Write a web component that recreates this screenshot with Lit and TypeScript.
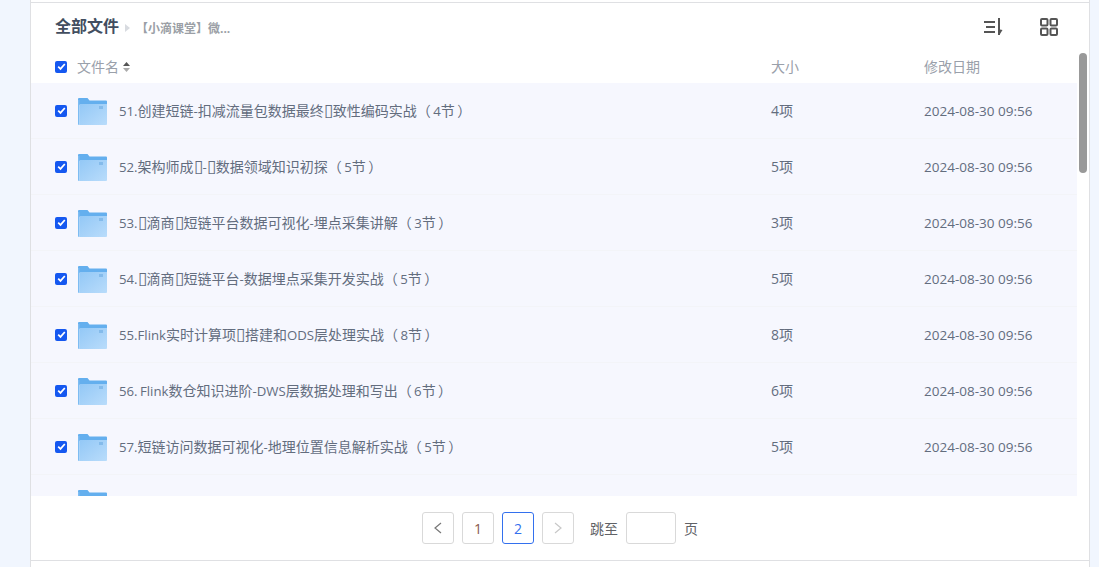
import { LitElement, html, css, nothing } from 'lit';
import { customElement } from 'lit/decorators.js';

const MISSING = '\u25AF';

const rows = [
  { name: `51.创建短链-扣减流量包数据最终${MISSING}致性编码实战（ 4节 ）`, size: '4项' },
  { name: `52.架构师成${MISSING}-${MISSING}数据领域知识初探（ 5节 ）`, size: '5项' },
  { name: `53.${MISSING}滴商${MISSING}短链平台数据可视化-埋点采集讲解（ 3节 ）`, size: '3项' },
  { name: `54.${MISSING}滴商${MISSING}短链平台-数据埋点采集开发实战（ 5节 ）`, size: '5项' },
  { name: `55.Flink实时计算项${MISSING}搭建和ODS层处理实战（ 8节 ）`, size: '8项' },
  { name: '56. Flink数仓知识进阶-DWS层数据处理和写出（ 6节 ）', size: '6项' },
  { name: '57.短链访问数据可视化-地理位置信息解析实战（ 5节 ）', size: '5项' },
  // scrolled almost out of view, only the top of its folder shows
  { name: '', size: '' },
];

// latin runs are a touch smaller than the CJK around them, the original font is narrower
const mixed = (text: string) =>
  text
    .split(/([\x20-\x7e]+|\u25AF)/)
    .map((part, i) => (i % 2 ? html`<span class=${part === MISSING ? 'tofu' : 'lat'}>${part}</span>` : part));

const check = html`<span class="check">
  <svg width="9" height="9" viewBox="0 0 9 9"><path d="M1.2 4.6 3.5 6.9 7.8 2" fill="none" stroke="#fff" stroke-width="1.7"/></svg>
</span>`;

const folder = html`<svg class="folder" width="29" height="27" viewBox="0 0 29 27">
  <defs>
    <linearGradient id="fg" x1="0" y1="0" x2="1" y2="1">
      <stop offset="0" stop-color="#93c8f6"/>
      <stop offset="1" stop-color="#b9dcfb"/>
    </linearGradient>
  </defs>
  <path d="M0 1Q0 0 1 0H9.5L11.5 2.5H28Q29 2.5 29 3.5V7H0Z" fill="#64afee"/>
  <path d="M0 2H1.5V27H1Q0 27 0 26Z" fill="#7dbcf2"/>
  <path d="M1.5 6H29V26Q29 27 28 27H1.5Z" fill="url(#fg)"/>
  <rect x="21" y="8" width="4" height="3" fill="#84bbeb"/>
</svg>`;

@customElement('app-root')
export class AppRoot extends LitElement {
  static styles = css`
    :host {
      display: block;
      height: 567px;
      overflow: hidden;
      background: #f1f6fe;
      font-family: 'Open Sans', 'Noto Sans CJK SC', sans-serif;
      font-size: 14px;
      color: #636d7e;
    }
    .shell {
      box-sizing: border-box;
      height: 567px;
      width: 1060px;
      margin-left: 30px;
      padding-top: 2px;
      background: #fff;
      border-left: 1px solid #dfe0e3;
      border-right: 1px solid #dfe0e3;
    }
    .panel {
      position: relative;
      box-sizing: border-box;
      height: 559px;
      border-top: 1px solid #dfe0e3;
      border-bottom: 1px solid #dfe0e3;
    }
    .top {
      display: flex;
      align-items: center;
      height: 47px;
      padding: 0 31px 0 24px;
    }
    .title {
      font-size: 16px;
      font-weight: 700;
      color: #424e60;
      line-height: 49px;
    }
    .sep {
      width: 0;
      height: 0;
      margin: 2px 6px 0 6px;
      border: 4px solid transparent;
      border-left: 5px solid #d8dbe0;
      border-right: 0;
    }
    .crumb {
      margin-top: 2px;
      font-size: 12px;
      font-weight: 700;
      color: #9b9fa6;
    }
    .tools {
      margin-left: auto;
      display: flex;
      align-items: center;
      gap: 37px;
    }
    .tools svg {
      display: block;
    }
    .head,
    .row {
      display: grid;
      grid-template-columns: 22px 694px 153px 1fr;
      align-items: center;
      padding-left: 24px;
    }
    .head {
      height: 31px;
      padding-bottom: 2px;
      color: #9aa0aa;
    }
    .head .check {
      margin-top: 2px;
    }
    .sort {
      display: inline-block;
      margin-left: 4px;
      vertical-align: 0;
    }
    .list {
      width: 1046px;
      height: 413px;
      overflow: hidden;
      background: #f6f7fe;
    }
    .row {
      height: 56px;
      box-sizing: border-box;
      border-bottom: 1px solid #f3f4f8;
      color: #636d7e;
    }
    .namecell {
      display: flex;
      align-items: center;
      gap: 12px;
    }
    .name,
    .size {
      margin-bottom: 2px;
    }
    .lat {
      font-size: 13.2px;
      word-spacing: -1px;
    }
    .tofu {
      font-size: 17px;
      line-height: 1;
    }
    .check {
      display: flex;
      align-items: center;
      justify-content: center;
      width: 12px;
      height: 12px;
      background: #1558f0;
      border-radius: 2px;
    }
    .folder {
      display: block;
      flex: none;
      margin: 1px 0 0 1px;
    }
    .date {
      font-size: 13.5px;
    }
    .thumb {
      position: absolute;
      top: 50px;
      left: 1048px;
      width: 8px;
      height: 120px;
      border-radius: 4px;
      background: #999;
    }
    .pager {
      display: flex;
      align-items: center;
      justify-content: center;
      gap: 8px;
      height: 64px;
      color: #606266;
    }
    .btn {
      display: flex;
      align-items: center;
      justify-content: center;
      box-sizing: border-box;
      width: 32px;
      height: 32px;
      border: 1px solid #d9d9d9;
      border-radius: 3px;
      color: #8a5a4c;
    }
    .btn.on {
      border-color: #3370ee;
      color: #3370ee;
    }
    .jump {
      margin-left: 8px;
    }
    .input {
      box-sizing: border-box;
      width: 50px;
      height: 32px;
      border: 1px solid #d9d9d9;
      border-radius: 3px;
    }
  `;

  render() {
    return html`
      <div class="shell">
        <div class="panel">
          <div class="top">
            <span class="title">全部文件</span>
            <span class="sep"></span>
            <span class="crumb">【小滴课堂】微...</span>
            <div class="tools">
              <svg width="20" height="18" viewBox="0 0 20 18" fill="none" stroke="#555" stroke-width="2">
                <path d="M1 4H12M3 9H12M1 14H12"/>
                <path d="M16 0V17"/>
                <path d="M17 11.5 19.5 12 17 16Z" fill="#555" stroke="none"/>
              </svg>
              <svg width="18" height="18" viewBox="0 0 18 18" fill="none" stroke="#555" stroke-width="2">
                <rect x="1" y="1" width="6.5" height="6.5" rx="1"/>
                <rect x="10.5" y="1" width="6.5" height="6.5" rx="1"/>
                <rect x="1" y="10.5" width="6.5" height="6.5" rx="1"/>
                <rect x="10.5" y="10.5" width="6.5" height="6.5" rx="1"/>
              </svg>
            </div>
          </div>
          <div class="head">
            ${check}
            <span>文件名<svg class="sort" width="7" height="10" viewBox="0 0 7 10"><path d="M3.5 0 7 4H0Z" fill="#555"/><path d="M3.5 10 7 6H0Z" fill="#aaa"/></svg></span>
            <span>大小</span>
            <span>修改日期</span>
          </div>
          <div class="list">
            ${rows.map(
              (r) => html`<div class="row">
                ${check}
                <div class="namecell">${folder}<span class="name">${mixed(r.name)}</span></div>
                <span class="size">${r.size}</span>
                ${r.size ? html`<span class="date">2024-08-30 09:56</span>` : nothing}
              </div>`,
            )}
          </div>
          <div class="thumb"></div>
          <div class="pager">
            <span class="btn"><svg width="10" height="12" viewBox="0 0 10 12"><path d="M8 1 2 6 8 11" fill="none" stroke="#777" stroke-width="1.2"/></svg></span>
            <span class="btn">1</span>
            <span class="btn on">2</span>
            <span class="btn"><svg width="10" height="12" viewBox="0 0 10 12"><path d="M2 1 8 6 2 11" fill="none" stroke="#c8c8c8" stroke-width="1.2"/></svg></span>
            <span class="jump">跳至</span>
            <span class="input"></span>
            <span>页</span>
          </div>
        </div>
      </div>
    `;
  }
}
